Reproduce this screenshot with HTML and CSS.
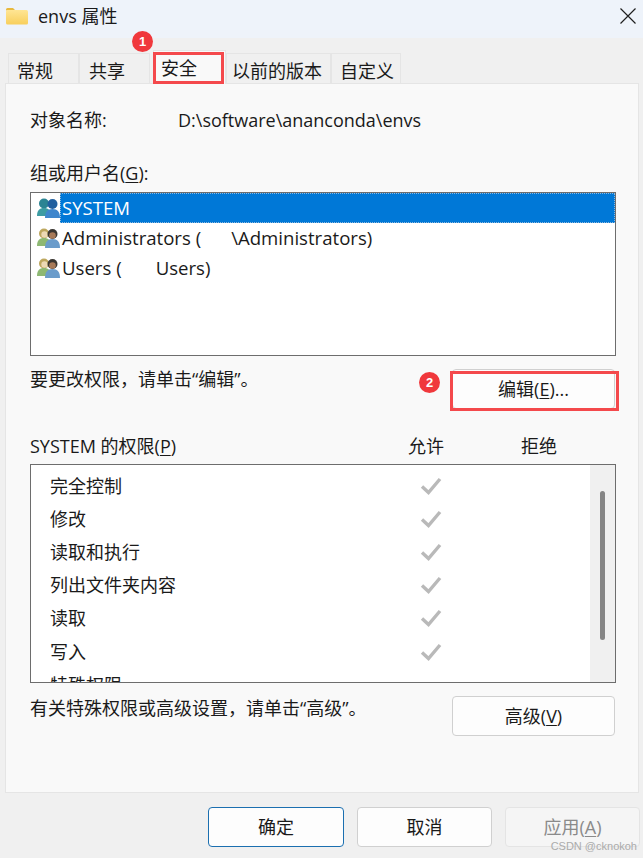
FILE: index.html

```html
<!DOCTYPE html>
<html lang="zh-CN">
<head>
  <meta charset="UTF-8" />
  <meta name="viewport" content="width=device-width, initial-scale=1" />
  <title>envs 属性</title>
  <link rel="stylesheet" href="styles.css">
</head>
<body>
  <svg class="defs" width="0" height="0">
    <defs>
      <linearGradient id="folder-fill" x1="0" y1="0" x2="0" y2="1">
        <stop offset="0" stop-color="#ffe594"/>
        <stop offset="1" stop-color="#f8cf5c"/>
      </linearGradient>
      <symbol id="users-blue" viewBox="0 0 23 20">
        <circle cx="7" cy="5.500" r="5" fill="#2b8493"/>
        <path d="M0 18c0-5.500 2.500-8 7-8s7 2.500 7 8z" fill="#3d9ca3"/>
        <circle cx="15.500" cy="6" r="5" fill="#22609f"/>
        <path d="M8 20c0-6 2.500-9 7.500-9s7.500 3 7.500 9z" fill="#3f86cc"/>
      </symbol>
      <symbol id="users-mixed" viewBox="0 0 23 20">
        <circle cx="7" cy="5.500" r="5" fill="#bda75e"/>
        <circle cx="7.500" cy="6.500" r="3.200" fill="#ecd9b4"/>
        <path d="M0 18c0-5.500 2.500-8 7-8s7 2.500 7 8z" fill="#8db873"/>
        <circle cx="15.500" cy="6" r="5" fill="#3a3631"/>
        <circle cx="15.500" cy="7.500" r="3.300" fill="#a87a58"/>
        <path d="M8 20c0-6 2.500-9 7.500-9s7.500 3 7.500 9z" fill="#6a9ccb"/>
      </symbol>
      <symbol id="check" viewBox="0 0 22 18">
        <path d="M2 9.500l6.500 6L20 2" fill="none" stroke="#b9b9b9" stroke-width="3.400"/>
      </symbol>
    </defs>
  </svg>

  <div class="dialog">
    <header class="titlebar">
      <svg class="folder" viewBox="0 0 22 18" width="22" height="18">
        <path d="M0 2.500A1.500 1.500 0 0 1 1.500 1H7l2.500 2.500H0z" fill="#e8b93e"/>
        <rect x="0" y="3" width="22" height="14.500" rx="1.500" fill="url(#folder-fill)"/>
      </svg>
      <span class="title">envs 属性</span>
      <svg class="close" viewBox="0 0 16 16" width="16" height="16">
        <path d="M.5.500l15 15M15.500.500l-15 15" stroke="#1f1f1f" stroke-width="1.200" fill="none"/>
      </svg>
    </header>

    <nav class="tabs">
      <div class="tab tab-first">常规</div>
      <div class="tab tab-share">共享</div>
      <div class="tab tab-active">安全<i class="mark mark-tab"></i><b class="badge badge-tab">1</b></div>
      <div class="tab tab-prev">以前的版本</div>
      <div class="tab tab-custom">自定义</div>
    </nav>

    <main class="panel">
      <div class="object-row">
        <span class="object-label">对象名称:</span>
        <span>D:\software\ananconda\envs</span>
      </div>

      <div class="group-label">组或用户名(<u>G</u>):</div>
      <ul class="user-list">
        <li class="user-row">
          <svg class="user-icon"><use href="#users-blue"/></svg>
          <span class="user-name selected">SYSTEM</span>
        </li>
        <li class="user-row">
          <svg class="user-icon"><use href="#users-mixed"/></svg>
          <span class="user-name">Administrators (<span class="blank blank-admin"></span>\Administrators)</span>
        </li>
        <li class="user-row">
          <svg class="user-icon"><use href="#users-mixed"/></svg>
          <span class="user-name">Users (<span class="blank blank-users"></span>Users)</span>
        </li>
      </ul>

      <div class="edit-row">
        <span>要更改权限，请单击“编辑”。</span>
        <button class="btn btn-side btn-edit">编辑(<u>E</u>)...<i class="mark mark-edit"></i><b class="badge badge-edit">2</b></button>
      </div>

      <div class="perm-head">
        <span class="perm-title">SYSTEM 的权限(<u>P</u>)</span>
        <span class="perm-allow">允许</span>
        <span class="perm-deny">拒绝</span>
      </div>
      <div class="perm-box">
        <div class="perm-rows">
          <div class="perm-row"><span>完全控制</span><svg class="check"><use href="#check"/></svg></div>
          <div class="perm-row"><span>修改</span><svg class="check"><use href="#check"/></svg></div>
          <div class="perm-row"><span>读取和执行</span><svg class="check"><use href="#check"/></svg></div>
          <div class="perm-row"><span>列出文件夹内容</span><svg class="check"><use href="#check"/></svg></div>
          <div class="perm-row"><span>读取</span><svg class="check"><use href="#check"/></svg></div>
          <div class="perm-row"><span>写入</span><svg class="check"><use href="#check"/></svg></div>
          <div class="perm-row"><span>特殊权限</span></div>
        </div>
        <div class="scrollbar"><div class="thumb"></div></div>
      </div>

      <div class="advanced-row">
        <span>有关特殊权限或高级设置，请单击“高级”。</span>
        <button class="btn btn-side">高级(<u>V</u>)</button>
      </div>
    </main>

    <footer class="footer">
      <button class="btn btn-foot btn-default">确定</button>
      <button class="btn btn-foot">取消</button>
      <button class="btn btn-foot btn-disabled">应用(<u>A</u>)</button>
    </footer>
    <div class="watermark">CSDN @cknokoh</div>
  </div>
</body>
</html>
```

FILE: styles.css

```css
* { box-sizing: border-box; }
html, body { margin: 0; padding: 0; }
body { width: 643px; height: 858px; overflow: hidden; background: #f0f0f0; color: #1a1a1a; font-family: "Open Sans", "Noto Sans CJK SC", sans-serif; font-size: 18px; line-height: 24px; }
u { text-underline-offset: 2px; }
.defs { display: block; height: 0; }
.dialog { position: relative; height: 858px; }

.titlebar { height: 38px; background: #eef3fa; display: flex; align-items: center; padding: 0 7px 0 6px; }
.folder { margin-right: 10px; margin-top: -6px; }
.title { flex: 1; margin-top: -6px; font-size: 18px; }
.close { margin-top: -6px; }

.tabs { display: flex; align-items: flex-end; height: 45px; padding-left: 8px; position: relative; z-index: 1; }
.tab { height: 30px; background: #f0f0f0; border: 1px solid #e5e5e5; border-bottom: none; padding: 5px 0 0 8px; white-space: nowrap; }
.tab-first { width: 71px; }
.tab-share { width: 71px; padding-left: 9px; }
.tab-active { position: relative; width: 73px; height: 34px; margin-left: 3px; background: #f9f9f9; padding: 5px 0 0 7px; margin-bottom: -1px; }
.tab-prev { width: 105px; padding-left: 5px; }
.tab-custom { width: 70px; }

.mark { position: absolute; border: 3px solid #f4494c; display: block; }
.mark-tab { left: -1px; top: 1px; width: 71px; height: 32px; }
.mark-edit { left: -3px; top: 1px; width: 169px; height: 40px; }
.badge { position: absolute; width: 21px; height: 21px; border-radius: 50%; background: #f0383c; color: #fff; font: bold 13px/21px "Liberation Sans", sans-serif; text-align: center; }
.badge-tab { left: -22px; top: -20px; }
.badge-edit { left: -34px; top: 2px; }

.panel { width: 634px; height: 710px; margin-left: 5px; background: #f9f9f9; border: 1px solid #e5e5e5; padding: 24px 23px 0 24px; }

.object-row { display: flex; height: 24px; }
.object-label { width: 148px; }
.group-label { margin-top: 29px; }

.user-list { list-style: none; margin: 7px 0 0; padding: 0 0 0 6px; height: 164px; width: 586px; background: #fff; border: 1px solid #6d6d6d; }
.user-row { display: flex; align-items: center; height: 30px; font-size: 18.6px; }
.user-icon { width: 23px; height: 20px; flex: none; }
.user-name { flex: 1; height: 30px; line-height: 30px; padding-left: 2px; }
.selected { background: #0078d7; color: #fff; outline: 1px dotted #8fb8dc; outline-offset: -1px; }
.blank { display: inline-block; }
.blank-admin { width: 30px; }
.blank-users { width: 34px; }

.edit-row { display: flex; justify-content: space-between; align-items: flex-start; margin-top: 11px; }
.btn { font: inherit; color: #1a1a1a; background: #fdfdfd; border: 1px solid #d0d0d0; border-radius: 4px; padding: 0; }
.btn-side { width: 163px; height: 40px; }
.btn-edit { position: relative; margin-top: 2px; }

.perm-head { position: relative; height: 24px; margin-top: 25px; }
.perm-allow { position: absolute; left: 378px; }
.perm-deny { position: absolute; left: 491px; }

.perm-box { display: flex; width: 586px; height: 219px; margin-top: 6px; background: #fff; border: 1px solid #6d6d6d; overflow: hidden; }
.perm-rows { flex: 1; padding: 4px 0 0 19px; }
.perm-row { position: relative; height: 33.2px; display: flex; align-items: center; }
.check { position: absolute; left: 370px; width: 22px; height: 18px; }
.scrollbar { width: 25px; background: #f0f0f0; padding: 26px 0 0 10px; }
.thumb { width: 5px; height: 149px; background: #858585; border-radius: 3px; }

.advanced-row { display: flex; justify-content: space-between; align-items: flex-start; margin-top: 13px; }

.footer { display: flex; gap: 13px; padding: 14px 3px 0 208px; }
.btn-foot { width: 135px; height: 40px; }
.btn-default { border: 1.500px solid #1b6fb0; width: 136px; }
.btn-disabled { background: #f5f5f5; border-color: #e4e4e4; color: #8a8a8a; }

.watermark { position: absolute; right: 6px; bottom: 3px; font: 11px/18px "Liberation Sans", sans-serif; color: #ababab; }
```
